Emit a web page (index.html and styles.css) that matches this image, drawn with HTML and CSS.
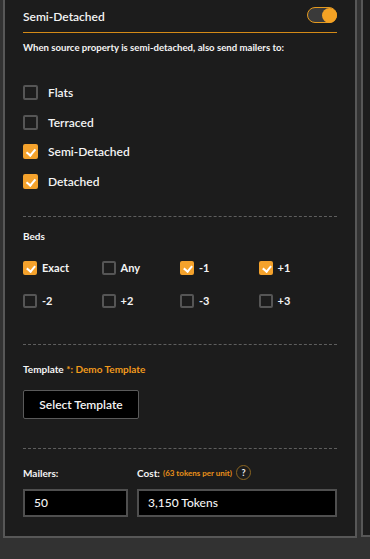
FILE: index.html
```html
<!DOCTYPE html>
<html>
<head>
<meta charset="utf-8">
<link rel="stylesheet" href="styles.css">
</head>
<body>
<div class="stage">
  <section class="panel">
    <header class="head">
      <span class="title">Semi-Detached</span>
      <span class="toggle"><span class="knob"></span></span>
    </header>
    <p class="desc">When source property is semi-detached, also send mailers to:</p>
    <ul class="types">
      <li class="opt"><span class="cb"></span><span class="lbl">Flats</span></li>
      <li class="opt"><span class="cb"></span><span class="lbl">Terraced</span></li>
      <li class="opt"><span class="cb on"></span><span class="lbl">Semi-Detached</span></li>
      <li class="opt"><span class="cb on"></span><span class="lbl">Detached</span></li>
    </ul>
    <hr class="dash dash-a">
    <div class="small-label beds-label">Beds</div>
    <div class="beds">
      <div class="bed"><span class="cb sm on"></span><span class="blbl">Exact</span></div>
      <div class="bed"><span class="cb sm"></span><span class="blbl">Any</span></div>
      <div class="bed"><span class="cb sm on"></span><span class="blbl">-1</span></div>
      <div class="bed"><span class="cb sm on"></span><span class="blbl">+1</span></div>
      <div class="bed"><span class="cb sm"></span><span class="blbl">-2</span></div>
      <div class="bed"><span class="cb sm"></span><span class="blbl">+2</span></div>
      <div class="bed"><span class="cb sm"></span><span class="blbl">-3</span></div>
      <div class="bed"><span class="cb sm"></span><span class="blbl">+3</span></div>
    </div>
    <hr class="dash dash-b">
    <div class="small-label tpl-label">Template <span class="orange">*: Demo Template</span></div>
    <button class="btn">Select Template</button>
    <hr class="dash dash-c">
    <div class="fields">
      <div class="field f-mailers">
        <div class="small-label flabel">Mailers:</div>
        <div class="input">50</div>
      </div>
      <div class="field f-cost">
        <div class="small-label flabel">Cost: <span class="per">(63 tokens per unit)</span><span class="help">?</span></div>
        <div class="input">3,150 Tokens</div>
      </div>
    </div>
  </section>
  <section class="panel2"></section>
</div>
</body>
</html>
```
FILE: styles.css
```css
html, body {
  margin: 0;
  padding: 0;
}
body {
  background: #323232;
  width: 370px;
  height: 559px;
  overflow: hidden;
  font-family: Lato, "Noto Sans", sans-serif;
  color: #f4f4f4;
}
.stage {
  display: flex;
  align-items: flex-start;
  padding-left: 3px;
  gap: 4px;
}
.panel {
  width: 314px;
  padding: 0 18px 19px 18px;
  background: #1c1c1c;
  border: 2px solid #575757;
  border-top: none;
}
.panel2 {
  flex: 1;
  height: 535px;
  background: #1c1c1c;
  border: 2px solid #575757;
  border-top: none;
  border-right: none;
}
.head {
  height: 32px;
  display: flex;
  align-items: center;
  justify-content: space-between;
  border-bottom: 1px solid #d38a17;
}
.title {
  font-size: 12px;
  font-weight: 600;
  padding-top: 1px;
}
.toggle {
  width: 28px;
  height: 14px;
  border: 1px solid #e59a1f;
  border-radius: 9px;
  background: #3a3a3a;
  display: flex;
  justify-content: flex-end;
  align-items: center;
  margin-top: -2px;
}
.knob {
  width: 15px;
  height: 15px;
  border-radius: 50%;
  background: #f4a224;
  margin-right: -1px;
}
.desc {
  margin: 8px 0 0;
  font-size: 9.6px;
  line-height: 14px;
  font-weight: 700;
}
.types {
  list-style: none;
  margin: 30px 0 0;
  padding: 0;
  display: flex;
  flex-direction: column;
  gap: 14.5px;
}
.opt {
  display: flex;
  align-items: center;
  gap: 10px;
  height: 15px;
}
.cb {
  width: 15px;
  height: 15px;
  box-sizing: border-box;
  border: 2px solid #555;
  border-radius: 2px;
  position: relative;
  flex: none;
}
.cb.sm {
  width: 14px;
  height: 14px;
}
.cb.on {
  background: #f4a22c;
  border-color: #f4a22c;
}
.cb.on::after {
  content: "";
  position: absolute;
  left: 3px;
  top: 1px;
  width: 4px;
  height: 7px;
  border-right: 2px solid #fff;
  border-bottom: 2px solid #fff;
  transform: rotate(40deg);
}
.cb.sm.on::after {
  left: 3px;
  top: 1px;
  width: 4px;
  height: 6px;
}
.lbl {
  font-size: 12px;
  font-weight: 600;
}
.dash {
  border: none;
  border-top: 1px dashed #5e5e5e;
  margin: 0;
  height: 0;
}
.dash-a { margin-top: 27px; }
.small-label {
  font-size: 10px;
  line-height: 14px;
  font-weight: 700;
}
.beds-label { margin-top: 12px; }
.beds {
  margin-top: 18px;
  display: grid;
  grid-template-columns: repeat(4, 1fr);
  row-gap: 19px;
}
.bed {
  display: flex;
  align-items: center;
  gap: 5px;
  height: 14px;
}
.blbl {
  font-size: 11px;
  font-weight: 700;
}
.dash-b { margin-top: 36px; }
.tpl-label { margin-top: 17px; }
.orange { color: #f19a1c; }
.btn {
  display: block;
  margin-top: 14px;
  width: 116px;
  height: 29px;
  background: #000;
  border: 1px solid #5a5a5a;
  border-radius: 2px;
  color: #f4f4f4;
  font-family: Lato, "Noto Sans", sans-serif;
  font-size: 12px;
  font-weight: 600;
  padding: 0;
}
.dash-c { margin-top: 29px; }
.fields {
  margin-top: 17px;
  display: flex;
  gap: 9px;
}
.f-mailers { width: 105px; }
.f-cost { flex: 1; }
.flabel {
  display: flex;
  align-items: center;
  height: 14px;
}
.per {
  color: #e8901a;
  font-size: 8px;
  margin-left: 3px;
}
.help {
  width: 13px;
  height: 13px;
  border: 1px solid #8a6420;
  border-radius: 50%;
  margin-left: 4px;
  font-size: 9px;
  display: flex;
  align-items: center;
  justify-content: center;
}
.input {
  margin-top: 9px;
  height: 28px;
  box-sizing: border-box;
  background: #000;
  border: 2px solid #4f4f4f;
  display: flex;
  align-items: center;
  padding-left: 9px;
  font-size: 12px;
  font-weight: 500;
}
```
